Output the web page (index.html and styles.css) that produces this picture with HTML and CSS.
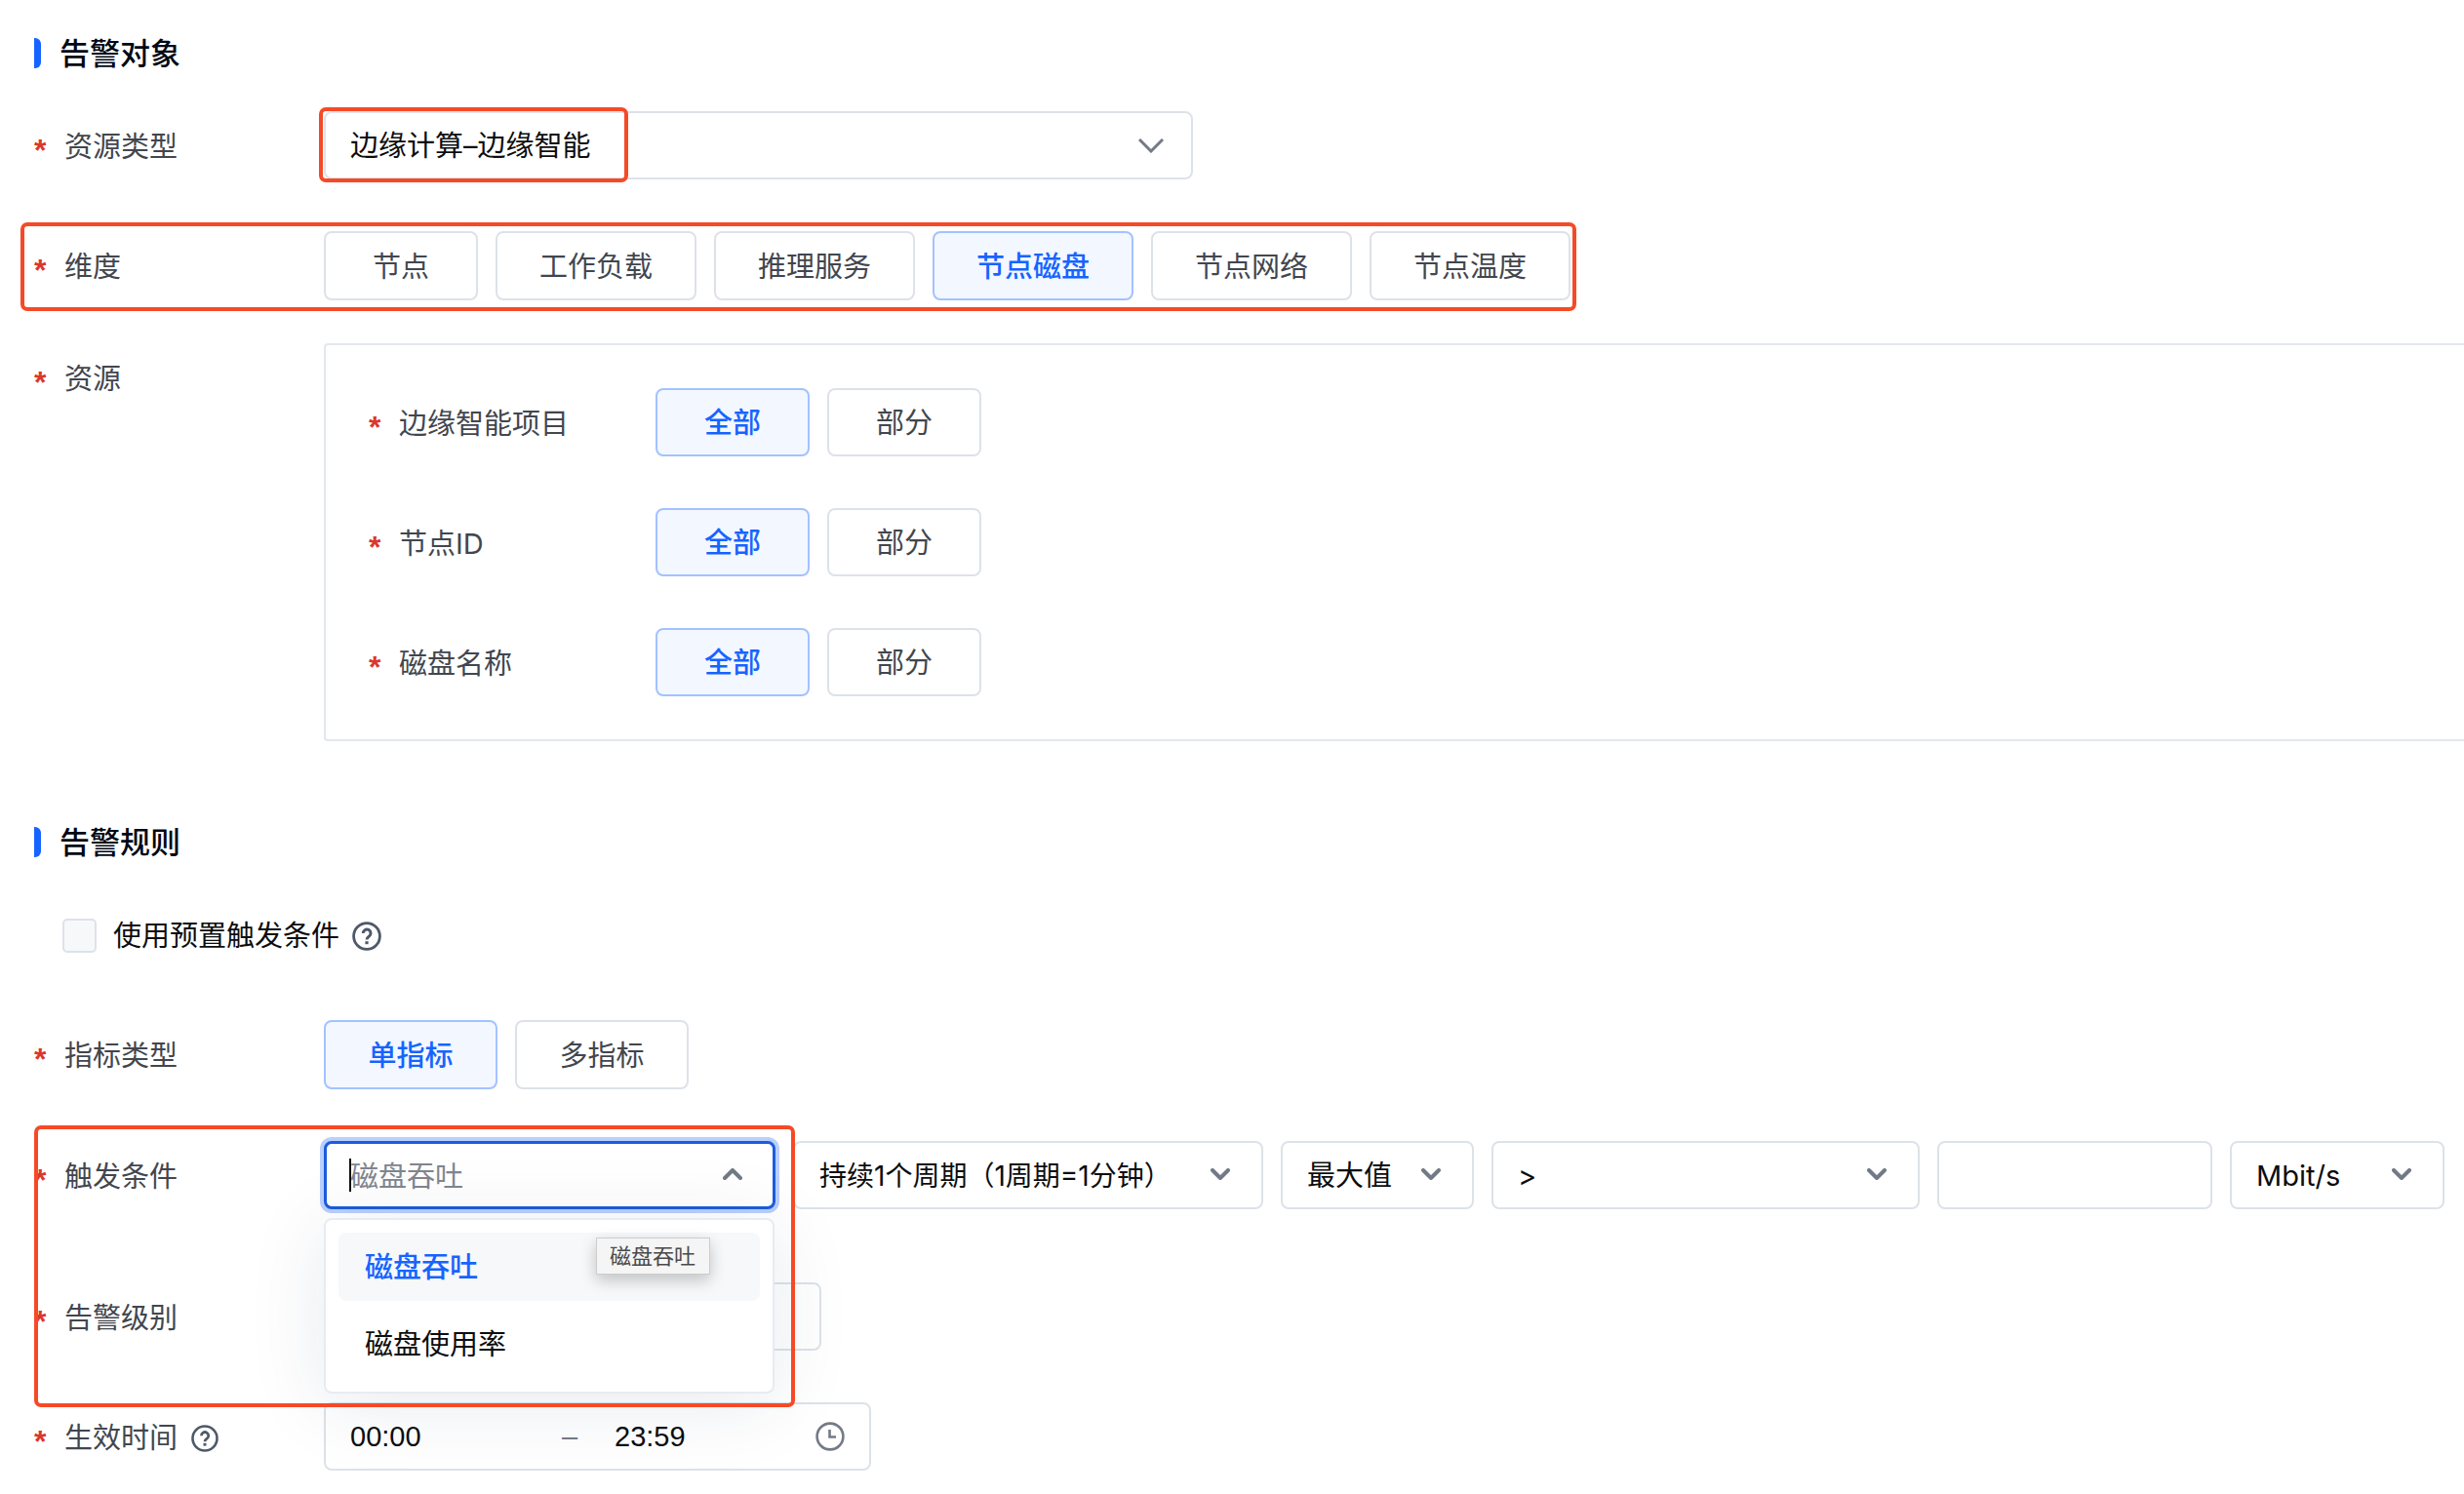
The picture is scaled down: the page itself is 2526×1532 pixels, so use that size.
FILE: index.html
```html
<!DOCTYPE html>
<html lang="zh-CN">
<head>
<meta charset="utf-8">
<title>告警规则</title>
<link rel="stylesheet" href="styles.css">
</head>
<body>
<svg class="defs" aria-hidden="true">
  <symbol id="chevron" viewBox="0 0 20 12"><path d="M2 2l8 8 8-8" fill="none" stroke="currentColor" stroke-width="4" stroke-linecap="round" stroke-linejoin="round"/></symbol>
  <symbol id="chevron-thin" viewBox="0 0 26 15"><path d="M1 1l12 12L25 1" fill="none" stroke="currentColor" stroke-width="3"/></symbol>
  <symbol id="help" viewBox="0 0 30 30"><circle cx="15" cy="15" r="13.400" fill="none" stroke="currentColor" stroke-width="2.800"/><path d="M11.200 12a3.900 3.900 0 1 1 6.200 3.100c-1.500 1.100-2.400 1.700-2.400 3.400" fill="none" stroke="currentColor" stroke-width="3"/><path d="M13.400 20.200h3.200v3h-3.200z" fill="currentColor"/></symbol>
  <symbol id="clock" viewBox="0 0 30 30"><circle cx="15" cy="15" r="13.400" fill="none" stroke="currentColor" stroke-width="2.600"/><path d="M14.500 8v7.500h6.500" fill="none" stroke="currentColor" stroke-width="2.600"/></symbol>
</svg>
<form class="page">
  <section class="section">
    <h2 class="title">告警对象</h2>
    <div class="row">
      <label class="label" for="type"><span class="star">*</span>资源类型</label>
      <div class="field field-wide">
        <select id="type"><option>边缘计算–边缘智能</option></select>
        <svg class="arrow arrow-thin"><use href="#chevron-thin"/></svg>
        <span class="mark mark-type"></span>
      </div>
    </div>
    <div class="row row-tight">
      <span class="label" id="dim"><span class="star">*</span>维度</span>
      <div class="choices" role="group" aria-labelledby="dim">
        <button type="button" class="choice">节点</button>
        <button type="button" class="choice choice-long">工作负载</button>
        <button type="button" class="choice choice-long">推理服务</button>
        <button type="button" class="choice choice-long active" aria-pressed="true">节点磁盘</button>
        <button type="button" class="choice choice-long">节点网络</button>
        <button type="button" class="choice choice-long">节点温度</button>
      </div>
      <span class="mark mark-dim"></span>
    </div>
    <div class="row">
      <span class="label"><span class="star">*</span>资源</span>
      <div class="panel">
        <div class="row">
          <span class="label" id="proj"><span class="star">*</span>边缘智能项目</span>
          <div class="choices" role="group" aria-labelledby="proj">
            <button type="button" class="choice active" aria-pressed="true">全部</button>
            <button type="button" class="choice">部分</button>
          </div>
        </div>
        <div class="row">
          <span class="label" id="node"><span class="star">*</span>节点ID</span>
          <div class="choices" role="group" aria-labelledby="node">
            <button type="button" class="choice active" aria-pressed="true">全部</button>
            <button type="button" class="choice">部分</button>
          </div>
        </div>
        <div class="row">
          <span class="label" id="disk"><span class="star">*</span>磁盘名称</span>
          <div class="choices" role="group" aria-labelledby="disk">
            <button type="button" class="choice active" aria-pressed="true">全部</button>
            <button type="button" class="choice">部分</button>
          </div>
        </div>
      </div>
    </div>
  </section>

  <section class="section">
    <h2 class="title">告警规则</h2>
    <div class="preset">
      <input type="checkbox" id="preset">
      <label for="preset">使用预置触发条件</label>
      <svg class="help"><use href="#help"/></svg>
    </div>
    <div class="row">
      <span class="label" id="kind"><span class="star">*</span>指标类型</span>
      <div class="choices" role="group" aria-labelledby="kind">
        <button type="button" class="choice choice-mid active" aria-pressed="true">单指标</button>
        <button type="button" class="choice choice-mid">多指标</button>
      </div>
    </div>
    <div class="row row-loose">
      <label class="label" for="metric"><span class="star">*</span>触发条件</label>
      <div class="trigger">
        <div class="field focused">
          <input id="metric" type="text" role="combobox" aria-expanded="true" placeholder="磁盘吞吐">
          <span class="caret"></span>
          <svg class="arrow arrow-up"><use href="#chevron"/></svg>
          <ul class="menu" role="listbox">
            <li class="option selected" role="option" aria-selected="true">磁盘吞吐<span class="tooltip">磁盘吞吐</span></li>
            <li class="option" role="option">磁盘使用率</li>
          </ul>
        </div>
        <div class="field">
          <select class="period" aria-label="持续周期"><option>持续1个周期（1周期=1分钟）</option></select>
          <svg class="arrow"><use href="#chevron"/></svg>
        </div>
        <div class="field">
          <select aria-label="统计方式"><option>最大值</option></select>
          <svg class="arrow"><use href="#chevron"/></svg>
        </div>
        <div class="field">
          <select aria-label="比较"><option>&gt;</option></select>
          <svg class="arrow"><use href="#chevron"/></svg>
        </div>
        <div class="field"><input type="text" aria-label="阈值"></div>
        <div class="field">
          <select aria-label="单位"><option>Mbit/s</option></select>
          <svg class="arrow"><use href="#chevron"/></svg>
        </div>
      </div>
      <span class="mark mark-trigger"></span>
    </div>
    <div class="row">
      <label class="label" for="level"><span class="star">*</span>告警级别</label>
      <div class="field field-level"><select id="level"></select></div>
    </div>
    <div class="row">
      <label class="label" for="from"><span class="star">*</span>生效时间<svg class="help"><use href="#help"/></svg></label>
      <div class="time">
        <input id="from" class="from" type="text" value="00:00">
        <span class="dash">–</span>
        <input type="text" class="to" value="23:59" aria-label="结束时间">
        <svg class="clock"><use href="#clock"/></svg>
      </div>
    </div>
  </section>
</form>
</body>
</html>
```
FILE: styles.css
```css
* { box-sizing: border-box; }

body {
  margin: 0;
  overflow-x: hidden;
  background: #fff;
  color: #0c0d0e;
  font: 29px/40px Inter, "Noto Sans CJK SC", sans-serif;
}

button, input, select { font: inherit; color: inherit; }

.defs { position: absolute; width: 0; height: 0; }

.page { padding: 39px 20px 24px 35px; }

.section + .section { margin-top: 88px; }

.title {
  display: flex;
  align-items: center;
  height: 31px;
  margin: 0 0 44px;
  color: #020814;
  font-size: 31px;
  font-weight: 500;
}

.title::before {
  content: "";
  width: 7px;
  height: 31px;
  margin-right: 19px;
  border-radius: 0 6px 6px 0;
  background: #1664ff;
}

.row {
  position: relative;
  display: flex;
  align-items: flex-start;
  margin-bottom: 53px;
}

.row-tight { margin-bottom: 44px; }
.row-loose { margin-bottom: 75px; }
.row:last-child { margin-bottom: 0; }

.label {
  display: flex;
  flex: none;
  align-items: center;
  width: 297px;
  height: 70px;
  padding-top: 3px;
  color: #42464e;
}

.star {
  width: 31px;
  padding-top: 6px;
  color: #db372d;
  font-family: "Liberation Sans", sans-serif;
  font-size: 32px;
  font-weight: 700;
}

.help { width: 30px; height: 30px; color: #4e5969; }

.label .help { width: 28px; height: 28px; margin-left: 14px; }

.choices { display: flex; flex-wrap: wrap; gap: 18px; }

.choice {
  min-width: 158px;
  height: 71px;
  padding: 2px 0 0;
  border: 2px solid #dde2e9;
  border-radius: 8px;
  background: #fff;
  color: #42464e;
}

.choice-mid { min-width: 178px; }
.choice-long { min-width: 206px; }

.active {
  border-color: #a3c2ff;
  background: #f3f7ff;
  color: #1664ff;
  font-weight: 500;
}

.panel {
  flex: 1;
  margin-right: -20px;
  padding: 44px;
  border: 2px solid #e3e8ee;
  border-right: 0;
  border-radius: 4px 0 0 4px;
}

.panel .label { width: 294px; }
.panel .choice { height: 70px; }

.field { position: relative; height: 70px; }
.field-wide { width: 891px; }
.field-level { width: 510px; }

.field input, .field select {
  display: block;
  width: 100%;
  height: 100%;
  padding: 2px 25px 0;
  border: 2px solid #dde2e9;
  border-radius: 8px;
  outline: 0;
  appearance: none;
  background: #fff;
}

.field input::placeholder { color: #80868f; opacity: 1; }

.field .period { font-size: 28px; }

.arrow {
  position: absolute;
  top: 28px;
  right: 34px;
  width: 20px;
  height: 12px;
  color: #737a87;
  pointer-events: none;
}

.arrow-thin { right: 30px; width: 26px; height: 15px; }
.arrow-up { transform: rotate(180deg); }

.focused input {
  padding: 2px 24px 0;
  border: 3px solid #1c5cdc;
  box-shadow: 0 0 0 4px #b9cffd;
}

.caret {
  position: absolute;
  top: 18px;
  left: 26px;
  width: 2px;
  height: 34px;
  background: #0c0d0e;
}

.trigger {
  display: grid;
  flex: 1;
  grid-template-columns: 463px 482px 198px 440fr 282fr 220px;
  gap: 18px;
}

.menu {
  position: absolute;
  z-index: 2;
  top: 79px;
  left: 0;
  display: grid;
  gap: 9px;
  width: 462px;
  margin: 0;
  padding: 13px 13px 14px;
  border: 2px solid #e8ebf1;
  border-radius: 8px;
  background: #fff;
  box-shadow: 0 10px 80px rgba(20, 50, 90, 0.1);
  list-style: none;
}

.option {
  position: relative;
  padding: 16px 27px 14px;
  border-radius: 8px;
}

.selected { background: #f6f8fa; color: #1664ff; font-weight: 500; }

.tooltip {
  position: absolute;
  top: 5px;
  left: 264px;
  padding: 3px 14px 3px 13px;
  border: 1px solid #cdcdcd;
  background: #f5f5f5;
  box-shadow: 0 6px 16px rgba(0, 0, 0, 0.22);
  color: #4a4a4a;
  font-size: 22px;
  font-weight: 400;
  line-height: 30px;
}

.mark {
  position: absolute;
  z-index: 3;
  border: 4px solid #f54a27;
  border-radius: 7px;
  pointer-events: none;
}

.mark-type { top: -4px; left: -5px; width: 317px; height: 77px; }
.mark-dim { top: -9px; left: -14px; width: 1595px; height: 91px; }
.mark-trigger { top: -16px; left: 0; width: 780px; height: 289px; }

.preset {
  display: flex;
  align-items: center;
  height: 35px;
  margin: 63px 0 69px 29px;
}

.preset input {
  width: 35px;
  height: 35px;
  margin: 0 17px 0 0;
  border: 2px solid #dde2e9;
  border-radius: 5px;
  appearance: none;
  background: #f6f8fa;
}

.preset .help { margin-left: 13px; }

.time {
  display: flex;
  align-items: center;
  width: 561px;
  height: 70px;
  padding: 0 25px;
  border: 2px solid #dde2e9;
  border-radius: 8px;
  font-family: "Liberation Sans", sans-serif;
}

.time input {
  padding: 0;
  border: 0;
  outline: 0;
  background: none;
}

.time .from { flex: none; width: 217px; }
.time .to { flex: 1; min-width: 0; }

.dash { flex: none; width: 54px; color: #737a87; }

.clock { flex: none; width: 30px; height: 30px; color: #737a87; }
```
